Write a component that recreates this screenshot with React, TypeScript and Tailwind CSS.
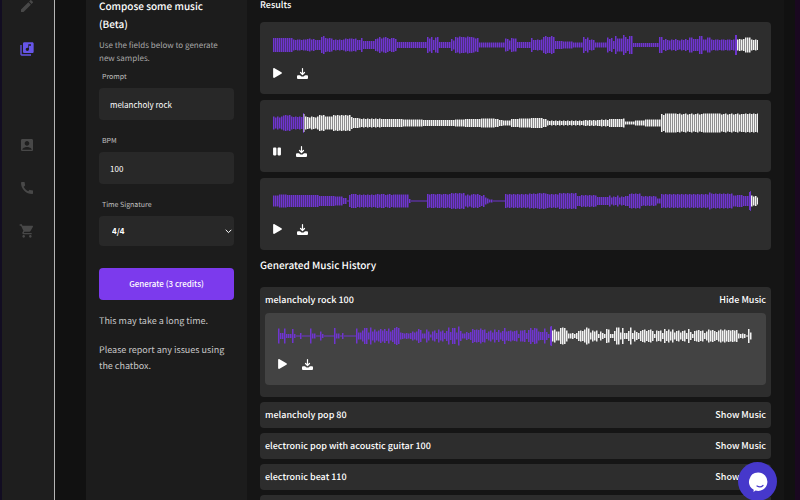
import { FaPause, FaPlay } from "react-icons/fa";
import { MdAccountBox, MdCall, MdEdit, MdLibraryMusic, MdShoppingCart } from "react-icons/md";

// each run is [end x, bar heights repeated up to that x], heights in base 36
type Run = [number, string];

type Track = {
    width: number;
    played: number;
    playing?: boolean;
    runs: Run[];
}

const results: Track[] = [
    {
        width: 485,
        played: 463,
        runs: [
            [19, "e"], [33, "bab"], [42, "cdb"], [48, "a"], [52, "gi"], [60, "ed"], [72, "ab"], [84, "dcd"], [87, "a"], [89, "e"],
            [101, "8"], [106, "cd"], [114, "gdf"], [124, "ece"], [154, "6"], [160, "gd"], [162, "a"], [166, "fg"], [178, "6"],
            [182, "c9"], [201, "gfhg"], [205, "de"], [231, "5"], [243, "dc9ed"], [244, "c"], [257, "6"], [262, "eaf"], [269, "ab"],
            [281, "gig"], [290, "8"], [300, "7"], [310, "5"], [315, "gcf"], [322, "ab"], [334, "5"], [339, "fce"], [341, "8"],
            [343, "i"], [349, "d"], [352, "k"], [356, "gc"], [359, "i"], [386, "4"], [389, "g"], [416, "aca9b"], [419, "f"],
            [425, "c"], [429, "i"], [434, "b"], [437, "f"], [462, "bab"], [464, "k"], [472, "bc"], [477, "f"], [485, "ba"],
        ],
    },
    {
        width: 485,
        played: 30,
        playing: true,
        runs: [
            [10, "db"], [18, "fg"], [29, "dc"], [31, "i"], [45, "dcb"], [52, "gf"], [60, "d"], [77, "gf"], [80, "c"], [86, "a"],
            [110, "98"], [130, "8"], [150, "7"], [182, "6"], [192, "7"], [208, "8"], [222, "9"], [226, "8"], [230, "6"],
            [238, "5"], [246, "8"], [258, "9"], [270, "a"], [273, "8"], [310, "54"], [325, "56"], [335, "67"], [350, "8"],
            [352, "9"], [362, "3"], [372, "5"], [388, "7"], [392, "ig"], [404, "j"], [430, "ijh"], [447, "j"], [470, "hij"],
            [485, "ij"],
        ],
    },
    {
        width: 485,
        played: 477,
        runs: [
            [6, "b"], [14, "d"], [46, "c"], [62, "a"], [70, "9"], [73, "6"], [75, "1"], [78, "c"], [84, "e"], [103, "cd"],
            [112, "ede"], [120, "cde"], [136, "d"], [138, "4"], [154, "1"], [177, "ede"], [191, "gf"], [200, "bd"], [206, "ed"],
            [212, "ca"], [216, "75"], [219, "3"], [231, "1"], [255, "ed"], [265, "fe"], [274, "gf"], [285, "ed"], [304, "gf"],
            [308, "a"], [323, "cb"], [334, "8"], [352, "8b79"], [356, "a"], [368, "ef"], [384, "a9"], [388, "5"], [436, "ed"],
            [438, "h"], [460, "fe"], [464, "b"], [470, "c"], [475, "a"], [477, "i"], [479, "b"], [485, "9a7"],
        ],
    },
];

const historyTrack: Track = {
    width: 475,
    played: 273,
    runs: [
        [2, "f"], [5, "6"], [6, "3"], [8, "f"], [14, "4"], [16, "e"], [18, "4"], [21, "1"], [24, "6"], [31, "1"], [34, "f"],
        [37, "5"], [41, "1"], [44, "96"], [46, "4"], [55, "1"], [57, "g"], [61, "5"], [63, "1"], [66, "6"], [77, "1"], [79, "f"],
        [83, "7"], [86, "b"], [89, "g"], [91, "7"], [94, "h"], [100, "9d"], [108, "be"], [112, "af"], [116, "9c"], [122, "gi"],
        [124, "7"], [134, "65"], [139, "97"], [144, "ec"], [147, "5"], [151, "d9"], [154, "3"], [168, "9b6d"], [170, "a"],
        [174, "h8"], [178, "g"], [180, "7"], [184, "ja"], [188, "5"], [194, "86"], [197, "ec"], [207, "dcfc"], [210, "6"],
        [216, "9b7"], [220, "d8"], [228, "c7ag"], [239, "9ab"], [240, "7"], [242, "4"], [246, "b"], [250, "c6"], [258, "cg"],
        [262, "f9"], [266, "8"], [270, "f8"], [272, "4"], [274, "j"], [278, "bd"], [282, "9"], [288, "gh"], [290, "b"],
        [294, "5"], [299, "64"], [306, "ab"], [308, "d"], [312, "hf"], [314, "7"], [319, "b9"], [321, "4"], [325, "96"],
        [328, "4"], [332, "ed"], [336, "4"], [338, "a"], [341, "h"], [343, "7"], [346, "g"], [349, "6"], [352, "a"], [354, "h"],
        [362, "6b8"], [375, "acd"], [378, "4"], [384, "ba"], [386, "6"], [390, "ea"], [396, "d9"], [404, "7ab"], [408, "ab"],
        [411, "6e"], [416, "84"], [425, "abc"], [430, "69"], [436, "dbc"], [442, "a8b"], [449, "db"], [459, "cb"], [468, "54"],
        [470, "1"], [471, "e"], [473, "7"],
    ],
};

const history = ["melancholy pop 80", "electronic pop with acoustic guitar 100", "electronic beat 110", "electronic beat 100"];

function getBars(runs: Run[]) {
    const bars: number[] = [];
    let x = 0;
    for (const [end, pattern] of runs) {
        for (let i = 0; x < end; i++, x += 2) {
            bars.push(parseInt(pattern[i % pattern.length], 36));
        }
    }
    return bars;
}

function Waveform({ track }: { track: Track }) {
    return (
        <svg viewBox={`0 0 ${track.width} 20`} preserveAspectRatio="none" className="block w-full h-5">
            {getBars(track.runs).map((height, i) => (
                <rect key={i} x={i * 2} y={10 - height / 2} width={height > 1 ? 1.5 : 2} height={height} fill={i * 2 < track.played ? "#6f35d0" : "#f2f2f2"} />
            ))}
            <rect x={track.played} y="0" width="0.7" height="20" fill="#7c3aed" />
        </svg>
    )
}

function DownloadIcon() {
    return (
        <svg viewBox="0 0 22 22" className="w-[11px] h-[11px]" fill="none" stroke="currentColor">
            <path d="M11 1.200v11M7 9l4 4 4-4" strokeWidth="2.400" strokeLinecap="round" strokeLinejoin="round" />
            <path d="M2 14.500h4l3 2.500h4l3-2.500h4a2 2 0 0 1 2 2v3.500a2 2 0 0 1-2 2H2a2 2 0 0 1-2-2v-3.500a2 2 0 0 1 2-2z" fill="currentColor" stroke="none" />
        </svg>
    )
}

function Player({ track, className }: { track: Track, className: string }) {
    return (
        <div className={`h-[72px] rounded px-[13px] pt-[13px] ${className}`}>
            <Waveform track={track} />
            <div className="flex items-center gap-[15px] h-4 mt-[10px]">
                {track.playing ? (
                    <button aria-label="Pause" className="cursor-pointer"><FaPause className="w-2 h-[9px]" /></button>
                ) : (
                    <button aria-label="Play" className="cursor-pointer"><FaPlay className="w-[9px] h-[10px]" /></button>
                )}
                <button aria-label="Download" className="cursor-pointer"><DownloadIcon /></button>
            </div>
        </div>
    )
}

export default function App() {
    return (
        <div className="flex h-screen overflow-hidden bg-[#111111] border-l-2 border-[#120d22] text-white font-['Noto_Sans_CJK_SC','Open_Sans',sans-serif] [text-rendering:geometricPrecision]">
            <nav className="w-[53px] shrink-0 pr-[2px] bg-[#1e1e1e] border-r border-[#b5b5b5] flex flex-col items-center text-[#484848] text-[16px]">
                <a href="#edit" aria-label="Edit" className="-mt-[2px]"><MdEdit /></a>
                <a href="#music" aria-label="Music" className="mt-[27px] text-[#6655e8]"><MdLibraryMusic /></a>
                <a href="#account" aria-label="Account" className="mt-20"><MdAccountBox /></a>
                <a href="#contact" aria-label="Contact" className="mt-[27px]"><MdCall /></a>
                <a href="#shop" aria-label="Shop" className="mt-[27px]"><MdShoppingCart /></a>
            </nav>
            <form className="w-[161px] shrink-0 ml-[31px] px-[13px] bg-[#1c1c1c] flex flex-col">
                <h1 className="-mt-[3px] pr-5 text-[10px] leading-[18px] font-medium">Compose some music (Beta)</h1>
                <p className="mt-[6px] pr-2 text-[8px] leading-[13px] text-[#a8a8a8]">Use the fields below to generate new samples.</p>
                <label htmlFor="prompt" className="mt-[6px] ml-[3px] text-[7px] leading-3 text-[#c0c0c0]">Prompt</label>
                <input id="prompt" type="text" defaultValue="melancholy rock" className="mt-[5px] h-8 w-full rounded-sm bg-[#282828] px-[11px] text-[8px] focus:outline-none" />
                <label htmlFor="bpm" className="mt-[15px] ml-[3px] text-[7px] leading-3 text-[#c0c0c0]">BPM</label>
                <input id="bpm" type="text" defaultValue="100" className="mt-[5px] h-8 w-full rounded-sm bg-[#282828] px-[11px] text-[8px] focus:outline-none" />
                <label htmlFor="signature" className="mt-[15px] ml-[3px] text-[7px] leading-3 text-[#c0c0c0]">Time Signature</label>
                <div className="relative mt-[5px]">
                    <select id="signature" className="block appearance-none h-[30px] w-full rounded-sm bg-[#282828] px-[13px] text-[8px] font-bold focus:outline-none">
                        <option>4/4</option>
                        <option>3/4</option>
                    </select>
                    <svg viewBox="0 0 7 5" className="absolute right-[2px] top-[13px] w-[7px] h-[5px] pointer-events-none" fill="none" stroke="white">
                        <path d="M0.700 0.800L3.500 3.600l2.800-2.800" />
                    </svg>
                </div>
                <button type="button" className="mt-[22px] h-8 w-full rounded-sm bg-[#7c3aed] text-[8px] font-medium cursor-pointer">Generate (3 credits)</button>
                <p className="mt-[13px] text-[9px] leading-4 text-[#c8c8c8]">This may take a long time.</p>
                <p className="mt-[13px] text-[9px] leading-4 text-[#c8c8c8]">Please report any issues using the chatbox.</p>
            </form>
            <main className="flex-1 min-w-0 px-[13px] bg-[#151515]">
                <h2 className="-mt-[3px] text-[9px] leading-4 font-medium">Results</h2>
                <div className="mt-[9px] flex flex-col gap-[6px]">
                    {results.map((track, i) => <Player key={i} track={track} className="bg-[#2d2d2d]" />)}
                </div>
                <h2 className="mt-[7px] text-[10px] leading-4 font-medium">Generated Music History</h2>
                <div className="mt-[14px] flex flex-col gap-[5px] text-[9px] leading-[26px] font-medium">
                    <div className="rounded bg-[#2d2d2d] px-[5px] pb-3">
                        <div className="flex justify-between">
                            <span>melancholy rock 100</span>
                            <button className="cursor-pointer">Hide Music</button>
                        </div>
                        <Player track={historyTrack} className="bg-[#434343]" />
                    </div>
                    {history.map((title) => (
                        <div key={title} className="flex justify-between rounded bg-[#2d2d2d] px-[5px]">
                            <span>{title}</span>
                            <button className="cursor-pointer">Show Music</button>
                        </div>
                    ))}
                </div>
            </main>
            <div className="w-4 shrink-0 border-r-[5px] border-[#1a0820]"></div>
            <button aria-label="Open chat" className="fixed right-[23px] -bottom-[1px] w-[39px] h-[39px] rounded-full bg-[#4638cb] flex items-center justify-center cursor-pointer">
                <svg viewBox="0 0 20 20" className="w-5 h-5">
                    <path d="M10 0.500a9.200 9.200 0 1 1-2.500 18L5.500 20l0.200-2.300A9.200 9.200 0 0 1 10 0.500z" fill="white" />
                    <path d="M9 14q3.500 2 6-0.500" fill="none" stroke="#4638cb" strokeWidth="1.200" strokeLinecap="round" />
                </svg>
            </button>
        </div>
    )
}
